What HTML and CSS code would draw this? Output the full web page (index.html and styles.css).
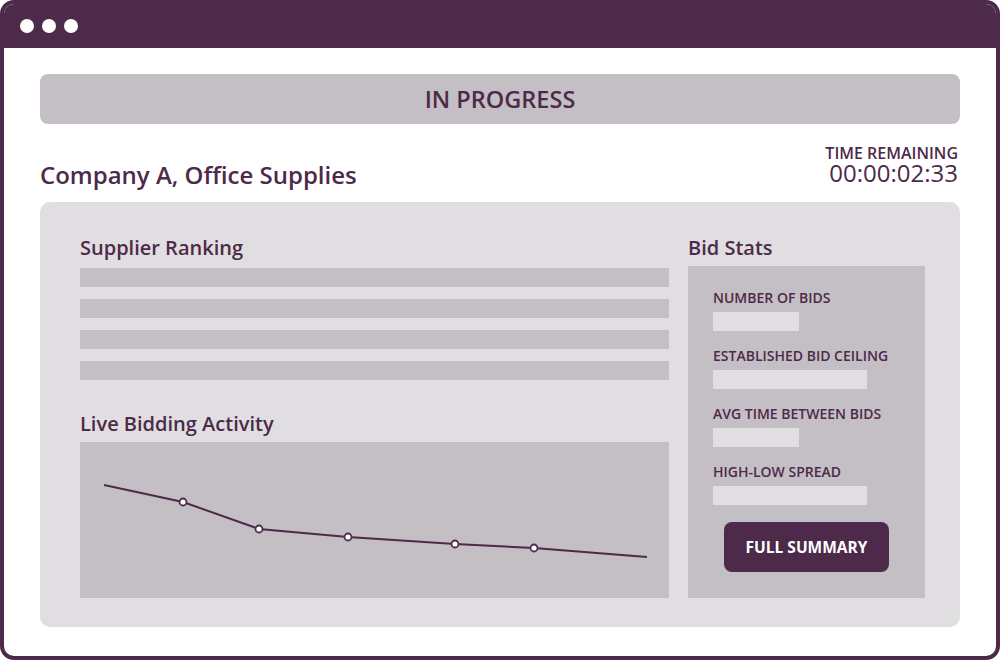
FILE: index.html
```html
<!DOCTYPE html>
<html lang="en">
<head>
<meta charset="utf-8">
<title>Auction In Progress</title>
<link rel="stylesheet" href="styles.css">
</head>
<body>
<div class="window">
  <div class="titlebar">
    <span class="dot"></span><span class="dot"></span><span class="dot"></span>
  </div>
  <div class="content">
    <div class="status">IN PROGRESS</div>
    <div class="header">
      <h1 class="title">Company A, Office Supplies</h1>
      <div class="timer">
        <div class="timer-label">TIME REMAINING</div>
        <div class="timer-value">00:00:02:33</div>
      </div>
    </div>
    <div class="panel">
      <div class="left">
        <h2 class="heading">Supplier Ranking</h2>
        <div class="ranking">
          <div class="rank-bar"></div>
          <div class="rank-bar"></div>
          <div class="rank-bar"></div>
          <div class="rank-bar"></div>
        </div>
        <h2 class="heading heading-live">Live Bidding Activity</h2>
        <div class="chart">
          <svg width="589" height="156" viewBox="0 0 589 156">
            <polyline points="24,43 103,60 179,87 268,95 375,102 454,106 567,115" fill="none" stroke="#4d2a49" stroke-width="2"/>
            <circle cx="103" cy="60" r="3.5" fill="#fff" stroke="#4d2a49" stroke-width="1.8"/>
            <circle cx="179" cy="87" r="3.5" fill="#fff" stroke="#4d2a49" stroke-width="1.8"/>
            <circle cx="268" cy="95" r="3.5" fill="#fff" stroke="#4d2a49" stroke-width="1.8"/>
            <circle cx="375" cy="102" r="3.5" fill="#fff" stroke="#4d2a49" stroke-width="1.8"/>
            <circle cx="454" cy="106" r="3.5" fill="#fff" stroke="#4d2a49" stroke-width="1.8"/>
          </svg>
        </div>
      </div>
      <div class="right">
        <h2 class="heading heading-stats">Bid Stats</h2>
        <div class="stats">
          <div class="stat">
            <div class="stat-label">NUMBER OF BIDS</div>
            <div class="stat-field short"></div>
          </div>
          <div class="stat">
            <div class="stat-label">ESTABLISHED BID CEILING</div>
            <div class="stat-field long"></div>
          </div>
          <div class="stat">
            <div class="stat-label">AVG TIME BETWEEN BIDS</div>
            <div class="stat-field short"></div>
          </div>
          <div class="stat">
            <div class="stat-label">HIGH-LOW SPREAD</div>
            <div class="stat-field long"></div>
          </div>
          <button class="summary-btn">FULL SUMMARY</button>
        </div>
      </div>
    </div>
  </div>
</div>
</body>
</html>
```
FILE: styles.css
```css
* { box-sizing: border-box; }
html, body { margin: 0; padding: 0; }
body {
  width: 1000px;
  height: 660px;
  background: #fff;
  font-family: "Open Sans", "Liberation Sans", sans-serif;
  color: #4d2a49;
}
.window {
  width: 1000px;
  height: 660px;
  border: 4px solid #4d2a49;
  border-radius: 14px;
  overflow: hidden;
  background: #fff;
}
.titlebar {
  height: 44px;
  background: #4d2a49;
  display: flex;
  align-items: center;
  gap: 8px;
  padding-left: 16px;
  padding-bottom: 1px;
}
.dot {
  width: 14px;
  height: 14px;
  border-radius: 50%;
  background: #fff;
}
.content {
  padding: 26px 36px 0 36px;
}
.status {
  height: 50px;
  background: #c4bfc4;
  border-radius: 8px;
  display: flex;
  align-items: center;
  justify-content: center;
  font-size: 23.5px;
  font-weight: 600;
  padding-bottom: 1px;
}
.header {
  display: flex;
  justify-content: space-between;
  align-items: flex-end;
  margin-top: 21px;
  margin-bottom: 12px;
}
.title {
  margin: 0;
  font-size: 24px;
  font-weight: 600;
  line-height: 30px;
}
.timer {
  text-align: right;
  padding-right: 2px;
  margin-bottom: 5px;
}
.timer-label {
  font-size: 16px;
  font-weight: 600;
  line-height: 16px;
}
.timer-value {
  font-size: 24px;
  line-height: 24px;
}
.panel {
  height: 425px;
  background: #e0dee0;
  border-radius: 10px;
  padding: 34px 35px 29px 40px;
  display: flex;
  gap: 19px;
}
.left {
  width: 589px;
  display: flex;
  flex-direction: column;
}
.right {
  width: 237px;
  display: flex;
  flex-direction: column;
}
.heading {
  margin: 0 0 8px;
  font-size: 20px;
  font-weight: 600;
  line-height: 24px;
}
.heading-stats {
  margin-bottom: 6px;
}
.ranking {
  display: flex;
  flex-direction: column;
  gap: 12px;
}
.rank-bar {
  height: 19px;
  background: #c4bfc4;
}
.heading-live {
  margin-top: 32px;
  margin-bottom: 6px;
}
.chart {
  height: 156px;
  background: #c4bfc4;
}
.chart svg { display: block; }
.stats {
  flex: 1;
  background: #c4bfc4;
  padding: 24px 25px 0 25px;
  display: flex;
  flex-direction: column;
}
.stat {
  margin-bottom: 17px;
}
.stat-label {
  font-size: 14px;
  font-weight: 600;
  line-height: 16px;
  margin-bottom: 6px;
}
.stat-field {
  height: 19px;
  background: #e0dee0;
}
.stat-field.short { width: 86px; }
.stat-field.long { width: 154px; }
.summary-btn {
  align-self: center;
  margin-top: 0;
  width: 165px;
  height: 50px;
  border: none;
  border-radius: 8px;
  background: #4d2a49;
  color: #fff;
  font-family: "Open Sans", "Liberation Sans", sans-serif;
  font-size: 15.5px;
  font-weight: 700;
  padding: 0;
}
```
